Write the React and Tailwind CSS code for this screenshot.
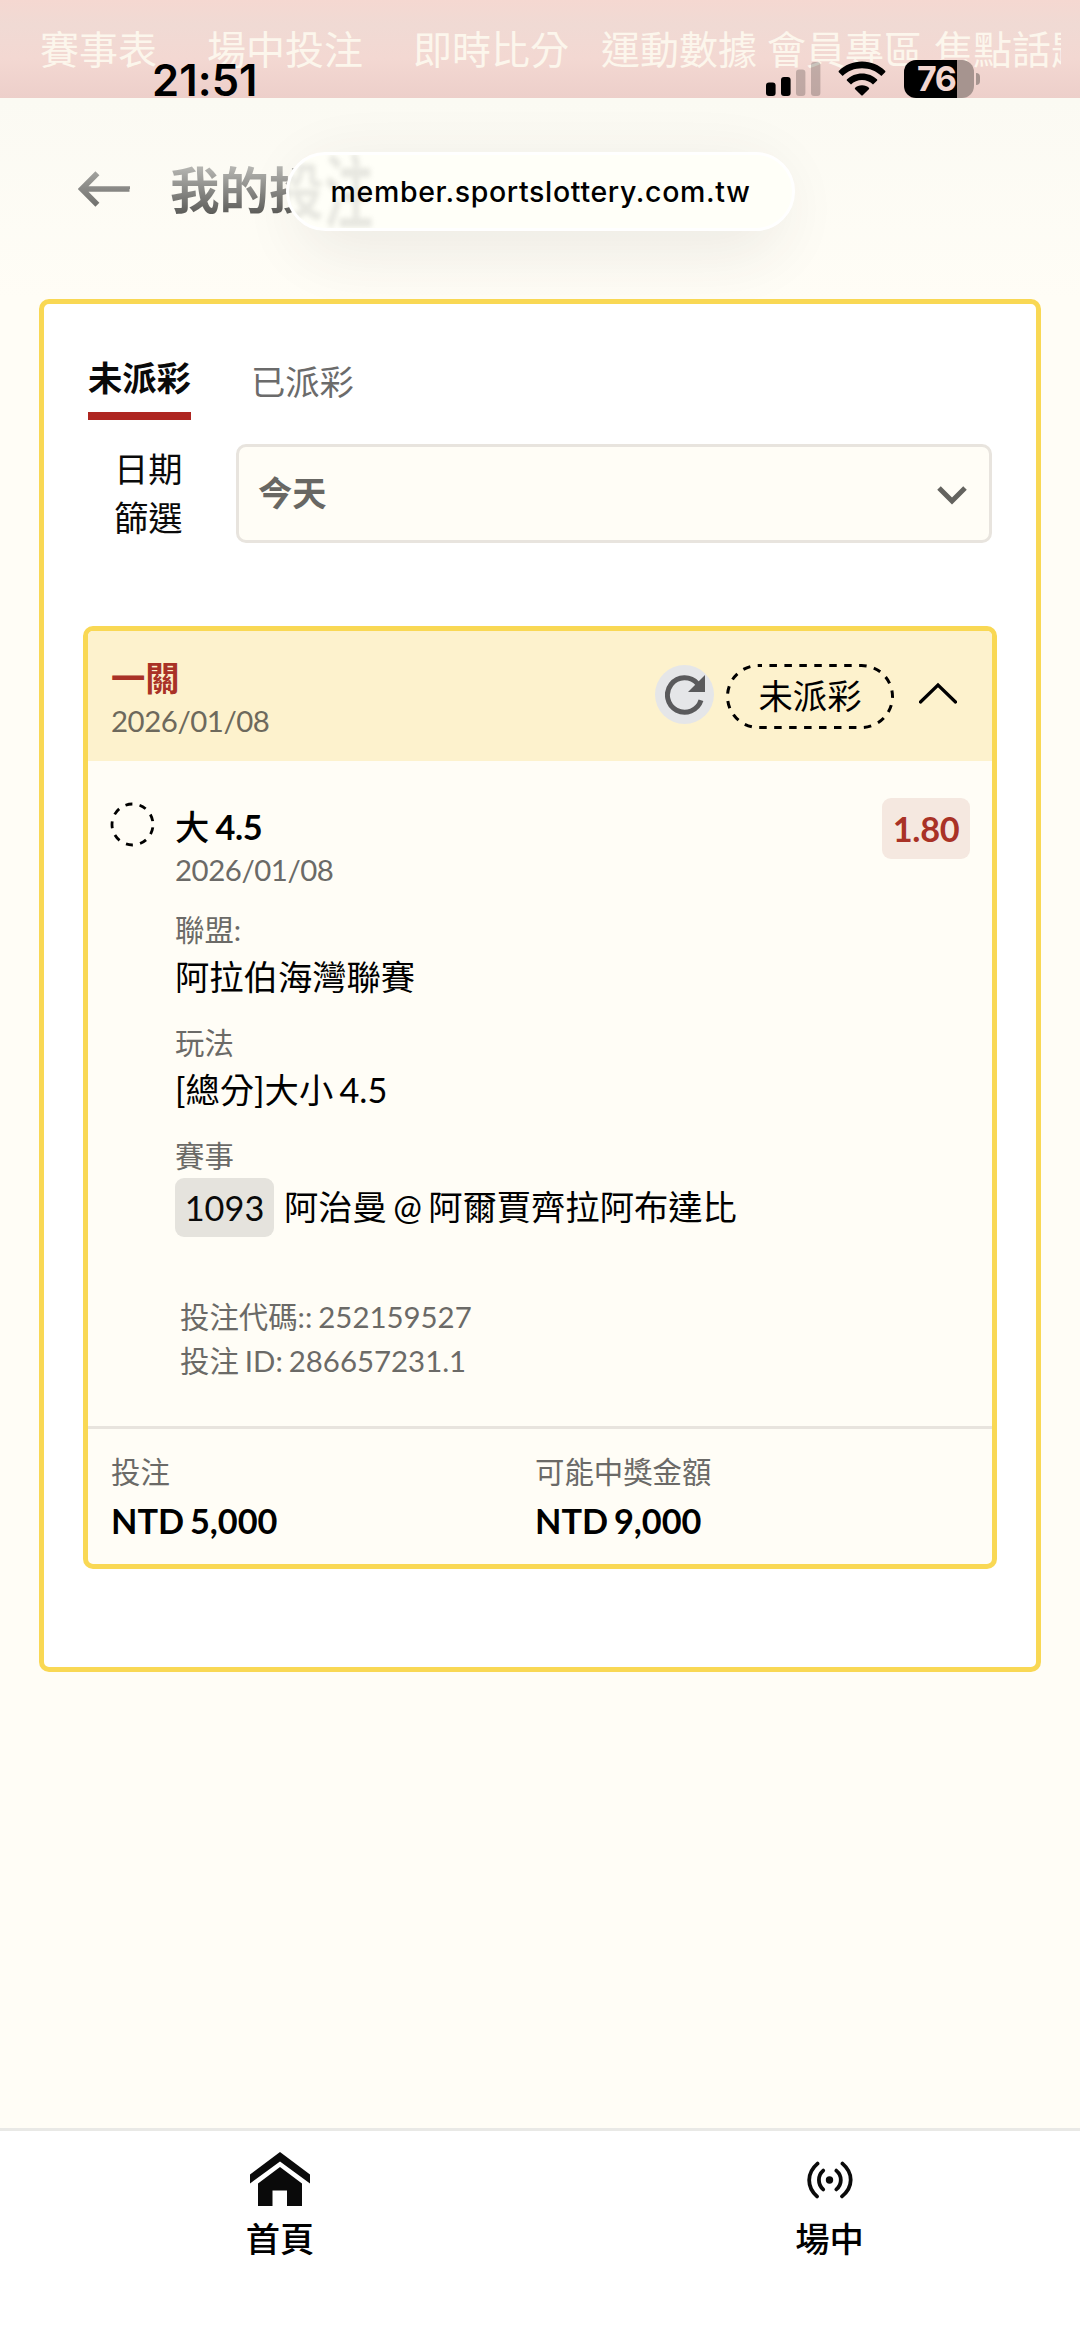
// App.jsx — member bet history page (未派彩 / 已派彩)

const NAV_ITEMS = [
  { label: '賽事表',   gap: 'ml-[40px]' },
  { label: '場中投注', gap: 'ml-[50px]' },
  { label: '即時比分', gap: 'ml-[50px]' },
  { label: '運動數據', gap: 'ml-[32px]' },
  { label: '會員專區', gap: 'ml-[10px]' },
  { label: '焦點話題', gap: 'ml-[11px]' },
]

const BET = {
  title: '一關',
  date: '2026/01/08',
  status: '未派彩',
  pick: '大',
  line: '4.5',
  odds: '1.80',
  code: '投注代碼:: 252159527',
  id: '投注 ID: 286657231.1',
}

// ── Icons ────────────────────────────────────────────────────────────────────
function SignalIcon() {
  return (
    <svg width="55" height="36" viewBox="0 0 55 36">
      <rect x="0" y="21.5" width="9.6" height="13.5" rx="3" />
      <rect x="15" y="16" width="9.6" height="19" rx="3" />
      <rect x="30" y="8.5" width="9.4" height="26.5" rx="3" opacity="0.2" />
      <rect x="45" y="1" width="9.4" height="34" rx="3" opacity="0.2" />
    </svg>
  )
}

function WifiIcon() {
  return (
    <svg width="48" height="36" viewBox="0 0 48 36">
      <path d="M24 0.5C33 0.5 41.2 4 47.3 9.9L47.4 10.9L43.4 14.9C38.2 9.9 31.4 7.2 24 7.2S9.8 9.9 4.6 14.9L0.6 10.9L0.7 9.9C6.8 4 15 0.5 24 0.5Z" />
      <path d="M24 12.4C29.9 12.4 35.2 14.7 39.2 18.4V19.4L35 23.4C32.1 20.7 28.2 19.1 24 19.1S15.9 20.7 13 23.4L8.8 19.4V18.4C12.8 14.7 18.1 12.4 24 12.4Z" />
      <path d="M24 24.2C26.8 24.2 29.3 25.2 31.1 26.9V27.9L24.5 34.5H23.5L16.9 27.9V26.9C18.7 25.2 21.2 24.2 24 24.2Z" />
    </svg>
  )
}

function ArrowLeftIcon() {
  return (
    <svg width="52" height="36" viewBox="0 0 52 36" fill="none" strokeWidth="5.6">
      <defs>
        <linearGradient id="arrowFade" x1="0" y1="0" x2="0" y2="36" gradientUnits="userSpaceOnUse">
          <stop offset="0" stopColor="#a3a39f" />
          <stop offset="1" stopColor="#6f6f6c" />
        </linearGradient>
      </defs>
      <path d="M19.4 2.2L3.8 18L19.4 33.8M4 18H51.5L51.5 18.01" stroke="url(#arrowFade)" />
    </svg>
  )
}

function RefreshIcon() {
  return (
    <svg width="40" height="40" viewBox="0 0 40 40">
      <path d="M36 25.3A17.2 17.2 0 1 1 32.5 8.6" fill="none" stroke="#5a5a5c" strokeWidth="5" />
      <path d="M40 0V17H23Z" fill="#5a5a5c" />
    </svg>
  )
}

function HomeIcon() {
  return (
    <svg width="60" height="54" viewBox="0 0 60 54" fill="#0a0a0a">
      <path d="M30 0L60 22.5V31.5L30 9.5L0 31.5V22.5Z" />
      <path d="M30 15L52 31.5V54H37V38.5H22.500V54H8V31.5Z" />
    </svg>
  )
}

function LiveIcon() {
  return (
    <svg width="46" height="38" viewBox="0 0 46 38" fill="none" stroke="#0a0a0a" strokeWidth="3.8" strokeLinecap="round">
      <circle cx="22.500" cy="19" r="3.7" fill="#0a0a0a" stroke="none" />
      <path d="M16.200 9.600C10.500 14.500 10.500 23.500 16.200 28.400M29.300 9.600C35.300 14.500 35.300 23.500 29.300 28.400" />
      <path d="M10.500 2.600C-0.500 12 -0.500 26 10 35.400M35.500 2.600C46.500 12 46.500 26 35 35.400" />
    </svg>
  )
}

// ── Phone status bar, floats over the site nav ───────────────────────────────
function StatusBar() {
  return (
    <div className="absolute left-0 top-[60px] flex h-[38px] w-full items-center pl-[152px] text-black">
      <span className="mt-[4px] w-[614px] font-[Inter] text-[43.500px] leading-none font-semibold tracking-[0.1px]">21:51</span>
      <SignalIcon />
      <div className="ml-[17px]"><WifiIcon /></div>
      <div className="ml-[18px] flex h-[38px] w-[70px] items-center overflow-hidden rounded-[12px] bg-[linear-gradient(to_right,#000_53px,#a6948f_53px)]">
        <span className="pl-[13px] font-[Inter] text-[34px] leading-none font-bold tracking-[-1.5px] text-[#f2d6d0]">76</span>
      </div>
      <div className="ml-[2px] h-[12px] w-[4px] rounded-r-full bg-[#a6948f]" />
    </div>
  )
}

// ── Browser address pill ─────────────────────────────────────────────────────
function AddressPill() {
  return (
    <div className="absolute left-[286px] top-[152px] flex h-[79px] w-[509px] items-center justify-center overflow-hidden rounded-full border-[3px] border-white bg-[#fffff8]">
      {/* refraction of the title behind the glass */}
      <div aria-hidden="true" className="absolute -left-[14px] top-0 flex h-full items-center text-[49px] font-bold text-[#8a8a86] opacity-20 blur-[2.500px]">
        <span className="scale-y-125">投</span>
        <span className="scale-y-165">注</span>
      </div>
      <span className="relative pt-[2px] font-[Inter] text-[28.5px] font-medium tracking-[0.65px] whitespace-nowrap text-black">
        member.sportslottery.com.tw
      </span>
    </div>
  )
}

function Field({ label, children }) {
  return (
    <div className="flex flex-col">
      <span className="text-[29.4px] leading-[44px] text-[#6b6a67]">{label}</span>
      {children}
    </div>
  )
}

function BetCard() {
  return (
    <article className="mx-[39px] mt-[83px] flex h-[943px] flex-col overflow-hidden rounded-[10px] border-[5px] border-[#f9d854] bg-[#fffdf6] [word-spacing:-2.500px]">
      <header className="flex h-[130px] shrink-0 items-start justify-between bg-[#fdf2cd] pl-[23px]">
        <div className="flex flex-col pt-[25px]">
          <span className="text-[34.3px] leading-[43px] font-bold text-[#a93226]">{BET.title}</span>
          <span className="pt-[1px] text-[29.4px] leading-[42px] tracking-[-0.45px] text-[#6d695c]">{BET.date}</span>
        </div>
        <div className="flex items-center pt-[33px] pr-[35px]">
          <div className="-mt-[4px] flex size-[59px] items-center justify-center rounded-full bg-[#e5e6e8]">
            <RefreshIcon />
          </div>
          {/* dashed outline drawn as svg to keep the dash rhythm even */}
          <div className="relative ml-[12px] flex h-[65px] w-[168px] items-center justify-center">
            <svg className="absolute inset-0" width="168" height="65" fill="none">
              <rect x="1.500" y="1.500" width="165" height="62" rx="31" stroke="#000" strokeWidth="3" strokeDasharray="7.500 7.450" strokeDashoffset="4" />
            </svg>
            <span className="text-[34.3px] leading-none text-black">{BET.status}</span>
          </div>
          <svg className="ml-[25px] -mt-[7px]" width="38" height="22" viewBox="0 0 38 22" fill="none">
            <path d="M1.500 20L19 3L36.500 20" stroke="#000" strokeWidth="3.2" strokeLinecap="round" />
          </svg>
        </div>
      </header>

      <div className="flex pl-[22px] pr-[22px]">
        <svg className="mt-[41px] shrink-0" width="45" height="45" fill="none">
          <circle cx="22.500" cy="22.500" r="20.500" stroke="#000" strokeWidth="2.8" strokeDasharray="7 7.310" strokeDashoffset="-3" />
        </svg>
        <div className="ml-[20px] flex grow flex-col pt-[44px]">
          <span className="text-[34.3px] leading-[44px] font-medium text-black">
            {BET.pick} <span className="font-bold tracking-[-0.4px]">{BET.line}</span>
          </span>
          <span className="text-[29.4px] leading-[42px] tracking-[-0.45px] text-[#6b6a67]">{BET.date}</span>
          <div className="mt-[17px] flex flex-col gap-[19px]">
            <Field label="聯盟:">
              <span className="text-[34.3px] leading-[50px] text-black">阿拉伯海灣聯賽</span>
            </Field>
            <Field label="玩法">
              <span className="text-[34.3px] leading-[50px] text-black">[總分]大小 4.5</span>
            </Field>
            <Field label="賽事">
              <div className="flex items-center gap-[10px] text-[34.3px]">
                <span className="flex h-[59px] w-[99px] items-center justify-center rounded-[9px] bg-[#e5e3dd] text-[#0a0a0a]">1093</span>
                <span className="leading-none text-black">阿治曼 @ 阿爾賈齊拉阿布達比</span>
              </div>
            </Field>
          </div>
          <div className="mt-[58px] ml-[5px] flex flex-col text-[29.4px] leading-[44px] text-[#6b6a67] [word-spacing:-1.500px]">
            <span>{BET.code}</span>
            <span>{BET.id}</span>
          </div>
        </div>
        <span className="mt-[37px] -ml-[88px] flex h-[61px] w-[88px] items-center justify-center rounded-[9px] bg-[#f5e8e0] text-[34.3px] font-bold tracking-[-0.3px] text-[#a93226]">
          {BET.odds}
        </span>
      </div>

      <footer className="mt-auto grid h-[138px] shrink-0 grid-cols-[424px_1fr] border-t-[3px] border-[#e8e4de] pl-[23px]">
        {[
          ['投注', 'NTD 5,000'],
          ['可能中獎金額', 'NTD 9,000'],
        ].map(([label, amount]) => (
          <div key={label} className="flex flex-col pt-[21px]">
            <span className="text-[29.4px] leading-[44px] text-[#6b6a67]">{label}</span>
            <span className="pt-[1px] text-[34.3px] leading-[52px] font-bold text-black">{amount}</span>
          </div>
        ))}
      </footer>
    </article>
  )
}

export default function App() {
  return (
    <div className="relative flex h-[2347px] w-[1080px] flex-col overflow-hidden bg-[#fffdf6] font-[Lato,'Noto_Sans_CJK_TC',sans-serif]">
      {/* ── Site nav, faded behind the status bar ──────────────────── */}
      <nav className="flex h-[98px] shrink-0 items-center bg-[linear-gradient(#f5d8d1_0px,#f0dad4_25px,#f3d8d2_58px,#edcfca_98px)] pr-[19px]">
        <div className="flex overflow-hidden whitespace-nowrap">
          {NAV_ITEMS.map(item => (
            <span key={item.label} className={`shrink-0 text-[39px] leading-[50px] text-[#fcf6ec] ${item.gap}`}>
              {item.label}
            </span>
          ))}
        </div>
      </nav>

      {/* ── Page title ─────────────────────────────────────────────── */}
      <div className="flex h-[201px] shrink-0 items-start bg-gradient-to-b from-[#fbfaf3] to-[#fffdf6] pt-[60px] pl-[78px]">
        <div className="mt-[13px]"><ArrowLeftIcon /></div>
        <h1 className="ml-[40px] bg-[linear-gradient(#b4b4b0_10px,#5c5c59_56px)] bg-clip-text text-[49.500px] leading-[64px] font-bold text-transparent">
          我的投注
        </h1>
      </div>

      {/* ── Bets panel ─────────────────────────────────────────────── */}
      <main className="mx-[39px] flex h-[1373px] shrink-0 flex-col rounded-[10px] border-[5px] border-[#f9d854] bg-white">
        <div className="flex items-start pt-[44px] pl-[44px]">
          <button className="flex h-[72px] items-start border-b-[8px] border-[#ae2621] text-[34.3px] leading-[59px] font-bold text-[#0a0a0a]">未派彩</button>
          <button className="ml-[60px] text-[34.3px] leading-[68px] text-[#6b6b6b]">已派彩</button>
        </div>
        <div className="mt-[24px] flex items-start px-[44px] pr-[44px]">
          <div className="w-[148px] pl-[26px] text-[34.3px] leading-[49px] text-[#0a0a0a]">
            <div>日期</div>
            <div>篩選</div>
          </div>
          <div className="flex h-[99px] grow items-center justify-between rounded-[10px] border-[3px] border-[#e8e4de] bg-[#fffdf6] pr-[22px] pl-[19px]">
            <span className="text-[34.3px] leading-none font-bold text-[#686763]">今天</span>
            <svg className="mt-[3px]" width="30" height="20" viewBox="0 0 30 20" fill="none">
              <path d="M2 3L15 16L28 3" stroke="#64635f" strokeWidth="5" />
            </svg>
          </div>
        </div>
        <BetCard />
      </main>

      {/* ── Bottom tab bar ─────────────────────────────────────────── */}
      <nav className="mt-auto grid h-[219px] shrink-0 grid-cols-[560px_1fr] border-t-[3px] border-[#e9e9e6] bg-white text-[34.3px] font-medium text-black">
        <div className="flex flex-col items-center pt-[21px]">
          <HomeIcon />
          <span className="mt-[8px] leading-[50px]">首頁</span>
        </div>
        <div className="flex flex-col items-center pt-[30px] pl-[19px]">
          <LiveIcon />
          <span className="mt-[15px] leading-[50px]">場中</span>
        </div>
      </nav>

      {/* soft shadow around the pill, clipped to below the site nav */}
      <div className="pointer-events-none absolute left-0 top-[98px] h-[201px] w-full overflow-hidden">
        <div className="absolute left-[306px] top-[54px] h-[77px] w-[469px] rounded-full shadow-[0_18px_60px_10px_rgba(60,55,50,0.08)]" />
      </div>
      <AddressPill />
      <StatusBar />
    </div>
  )
}
